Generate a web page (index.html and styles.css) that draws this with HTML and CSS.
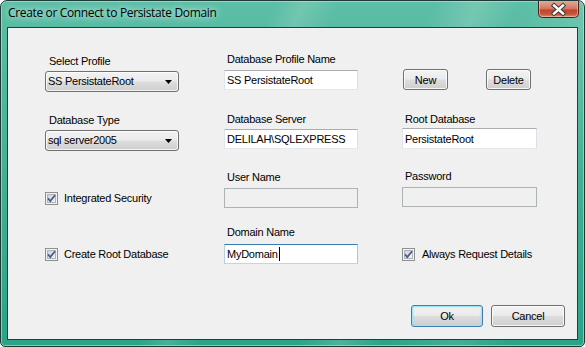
FILE: index.html
```html
<!DOCTYPE html>
<html>
<head>
<meta charset="utf-8">
<link rel="stylesheet" href="styles.css">
</head>
<body>
<div class="window">
  <div class="titlebar">
    <span class="title">Create or Connect to Persistate Domain</span>
    <div class="close">
      <svg width="41" height="17" viewBox="0 0 41 17">
        <defs>
          <linearGradient id="cg" x1="0" y1="0" x2="0" y2="1">
            <stop offset="0" stop-color="#e3a896"/>
            <stop offset="0.45" stop-color="#d27a63"/>
            <stop offset="0.55" stop-color="#c2452a"/>
            <stop offset="0.8" stop-color="#c9553a"/>
            <stop offset="1" stop-color="#e09a80"/>
          </linearGradient>
        </defs>
        <path d="M0.5 0 V12.5 Q0.5 16.5 4.5 16.5 H36.5 Q40.5 16.5 40.5 12.5 V0" fill="url(#cg)" stroke="#4a2119" stroke-width="1"/>
        <path d="M1.5 0 V12.5 Q1.5 15.5 4.5 15.5 H36.5 Q39.5 15.5 39.5 12.5 V0" fill="none" stroke="#f2c7b8" stroke-opacity="0.6" stroke-width="1"/>
        <path d="M16 4.5 L25 12.5 M25 4.5 L16 12.5" stroke="#3a3a3a" stroke-width="4.4" stroke-linecap="square"/>
        <path d="M16 4.5 L25 12.5 M25 4.5 L16 12.5" stroke="#ffffff" stroke-width="2.4" stroke-linecap="square"/>
      </svg>
    </div>
  </div>
  <div class="client">
    <div class="row row1">
      <div class="c1">
        <div class="label lab-c1">Select Profile</div>
        <div class="combo combo-r1"><span>SS PersistateRoot</span><svg class="arrow" width="7" height="4" viewBox="0 0 7 4"><polygon points="0,0 7,0 3.5,4" fill="#000"/></svg></div>
      </div>
      <div class="c2">
        <div class="label">Database Profile Name</div>
        <div class="textbox tb-r1">SS PersistateRoot</div>
      </div>
      <div class="c3 btns">
        <div class="btn small">New</div>
        <div class="btn small">Delete</div>
      </div>
    </div>
    <div class="row row2">
      <div class="c1">
        <div class="label lab-c1b">Database Type</div>
        <div class="combo combo-r2"><span>sql server2005</span><svg class="arrow" width="7" height="4" viewBox="0 0 7 4"><polygon points="0,0 7,0 3.5,4" fill="#000"/></svg></div>
      </div>
      <div class="c2">
        <div class="label">Database Server</div>
        <div class="textbox tb-r2">DELILAH\SQLEXPRESS</div>
      </div>
      <div class="c3">
        <div class="label">Root Database</div>
        <div class="textbox wide tb-r2b">PersistateRoot</div>
      </div>
    </div>
    <div class="row row3">
      <div class="c1">
        <label class="check cb-r"><span class="box"><svg width="13" height="13" viewBox="0 0 13 13"><defs><linearGradient id="bg1" x1="0" y1="0" x2="1" y2="1"><stop offset="0" stop-color="#cbcfd5"/><stop offset="1" stop-color="#f7f7f7"/></linearGradient></defs><rect x="0.5" y="0.5" width="12" height="12" fill="#f4f4f4" stroke="#8e8f8f"/><rect x="2.5" y="2.5" width="8" height="8" fill="url(#bg1)" stroke="#aeb3b9" stroke-width="1"/><path d="M3 6.3 L5.3 9 L10 3.2" fill="none" stroke="#4a5e8a" stroke-width="1.8"/></svg></span>Integrated Security</label>
      </div>
      <div class="c2">
        <div class="label lab-r3">User Name</div>
        <div class="textbox disabled tb-r3"></div>
      </div>
      <div class="c3">
        <div class="label">Password</div>
        <div class="textbox wide disabled tb-r3"></div>
      </div>
    </div>
    <div class="row row4">
      <div class="c1">
        <label class="check cb-r"><span class="box"><svg width="13" height="13" viewBox="0 0 13 13"><rect x="0.5" y="0.5" width="12" height="12" fill="#f4f4f4" stroke="#8e8f8f"/><rect x="2.5" y="2.5" width="8" height="8" fill="url(#bg1)" stroke="#aeb3b9" stroke-width="1"/><path d="M3 6.3 L5.3 9 L10 3.2" fill="none" stroke="#4a5e8a" stroke-width="1.8"/></svg></span>Create Root Database</label>
      </div>
      <div class="c2">
        <div class="label">Domain Name</div>
        <div class="textbox focused tb-r4">MyDomain<span class="caret"></span></div>
      </div>
      <div class="c3">
        <label class="check cb-r cb-c3"><span class="box"><svg width="13" height="13" viewBox="0 0 13 13"><rect x="0.5" y="0.5" width="12" height="12" fill="#f4f4f4" stroke="#8e8f8f"/><rect x="2.5" y="2.5" width="8" height="8" fill="url(#bg1)" stroke="#aeb3b9" stroke-width="1"/><path d="M3 6.3 L5.3 9 L10 3.2" fill="none" stroke="#4a5e8a" stroke-width="1.8"/></svg></span>Always Request Details</label>
      </div>
    </div>
    <div class="actions">
      <div class="btn default ok">Ok</div>
      <div class="btn cancel">Cancel</div>
    </div>
  </div>
</div>
</body>
</html>
```

FILE: styles.css
```css
html, body {
  margin: 0;
  padding: 0;
  background: #ffffff;
}
.window {
  width: 583px;
  height: 345px;
  border: 1px solid #1d3a35;
  border-radius: 7px 7px 5px 5px;
  background:
    linear-gradient(112deg, rgba(255,255,255,0) 0%, rgba(255,255,255,0) 38%, rgba(255,255,255,0.14) 42%, rgba(255,255,255,0) 47%, rgba(255,255,255,0) 60%, rgba(255,255,255,0.16) 66%, rgba(255,255,255,0) 72%, rgba(255,255,255,0.12) 82%, rgba(255,255,255,0) 90%),
    linear-gradient(180deg, #5cbea6 0%, #4db59b 30%, #2aa386 100%);
  box-shadow: inset 0 0 0 1px rgba(190, 240, 228, 0.55);
  display: flex;
  flex-direction: column;
  overflow: hidden;
  font-family: "Liberation Sans", Arial, sans-serif;
}
.titlebar {
  height: 26px;
  display: flex;
  justify-content: space-between;
  align-items: flex-start;
}
.title {
  margin-top: 4px;
  margin-left: 7px;
  font-family: "Open Sans", "Noto Sans", sans-serif;
  font-size: 12px;
  line-height: 16px;
  color: #000;
  letter-spacing: -0.35px;
  text-shadow: 0 0 6px rgba(220, 250, 242, 0.9), 0 0 10px rgba(220, 250, 242, 0.8);
}
.close {
  margin-right: 5px;
  height: 17px;
  display: flex;
}
.client {
  margin: 0 6px;
  width: 569px;
  height: 311px;
  border: 1px solid #223f3b;
  background: #f0f0f0;
  box-sizing: content-box;
  padding: 0;
  font-size: 11px;
  color: #000;
  display: flex;
  flex-direction: column;
}
.row {
  display: flex;
  padding-left: 37px;
}
.row1 { margin-top: 25px; height: 60px; }
.row2 { height: 57px; }
.row3 { height: 56px; }
.row4 { height: 38px; }
.c1 { width: 179px; display: flex; flex-direction: column; align-items: flex-start; }
.c2 { width: 178px; display: flex; flex-direction: column; align-items: flex-start; }
.c3 { flex: 1; display: flex; flex-direction: column; align-items: flex-start; }
.label {
  font-size: 11px;
  line-height: 13px;
  height: 13px;
  padding-left: 3px;
  letter-spacing: -0.25px;
  white-space: nowrap;
}
.lab-c1 { margin-top: 2px; padding-left: 4px; }
.lab-c1b { margin-top: 1px; padding-left: 4px; }
.lab-r3 { margin-top: 1px; }
.combo {
  box-sizing: border-box;
  width: 134px;
  height: 21px;
  border: 1px solid #707070;
  border-radius: 3px;
  background: linear-gradient(180deg, #f2f2f2 0%, #ebebeb 48%, #dddddd 52%, #cfcfcf 100%);
  box-shadow: inset 0 0 0 1px rgba(255,255,255,0.75);
  display: flex;
  align-items: center;
  padding: 0 6px 0 2px;
  line-height: 19px;
  letter-spacing: -0.25px;
  white-space: nowrap;
}
.combo .arrow { margin-left: auto; }
.combo-r1 { margin-top: 3px; }
.combo-r2 { margin-top: 3px; }
.textbox {
  box-sizing: border-box;
  width: 134px;
  height: 20px;
  border: 1px solid;
  border-color: #abadb3 #dbdfe6 #e3e9ef #e2e3ea;
  background: #fff;
  padding: 0 2px;
  line-height: 18px;
  letter-spacing: -0.25px;
  white-space: nowrap;
  display: flex;
  align-items: center;
}
.textbox.wide { width: 135px; }
.tb-r1 { margin-top: 4px; }
.tb-r2 { margin-top: 3px; }
.tb-r2b { margin-top: 2px; height: 21px; }
.tb-r3 { margin-top: 4px; }
.tb-r4 { margin-top: 5px; }
.textbox.disabled {
  background: #f0f0f0;
  border-color: #adb2b5;
}
.textbox.focused {
  border-color: #3d7bad #a4c9e3 #b7d9ed #b5cfe7;
}
.caret {
  display: inline-block;
  width: 1px;
  height: 14px;
  background: #000;
  margin-left: 1px;
}
.btns {
  flex-direction: row;
  align-items: flex-start;
  padding-top: 16px;
  padding-left: 1px;
  gap: 38px;
}
.btn {
  box-sizing: border-box;
  border: 1px solid #707070;
  border-radius: 3px;
  background: linear-gradient(180deg, #f2f2f2 0%, #ebebeb 48%, #dddddd 52%, #cfcfcf 100%);
  box-shadow: inset 0 0 0 1px rgba(255,255,255,0.8);
  display: flex;
  align-items: center;
  justify-content: center;
  font-size: 11px;
  letter-spacing: -0.25px;
}
.btn.small { width: 45px; height: 21px; }
.check {
  display: flex;
  align-items: center;
  gap: 6px;
  white-space: nowrap;
  letter-spacing: -0.25px;
  line-height: 13px;
}
.check .box { width: 13px; height: 13px; display: flex; }
.cb-r { margin-top: 22px; }
.cb-c3 { gap: 7px; }
.actions {
  margin-top: 41px;
  display: flex;
  justify-content: flex-end;
  gap: 8px;
  padding-right: 12px;
}
.ok { width: 72px; height: 22px; }
.cancel { width: 74px; height: 22px; }
.btn.default {
  border-color: #3c7fb1;
  box-shadow: inset 0 0 0 1px #9fe3f7, inset 0 0 2px 1px rgba(120, 210, 245, 0.5);
}
```
